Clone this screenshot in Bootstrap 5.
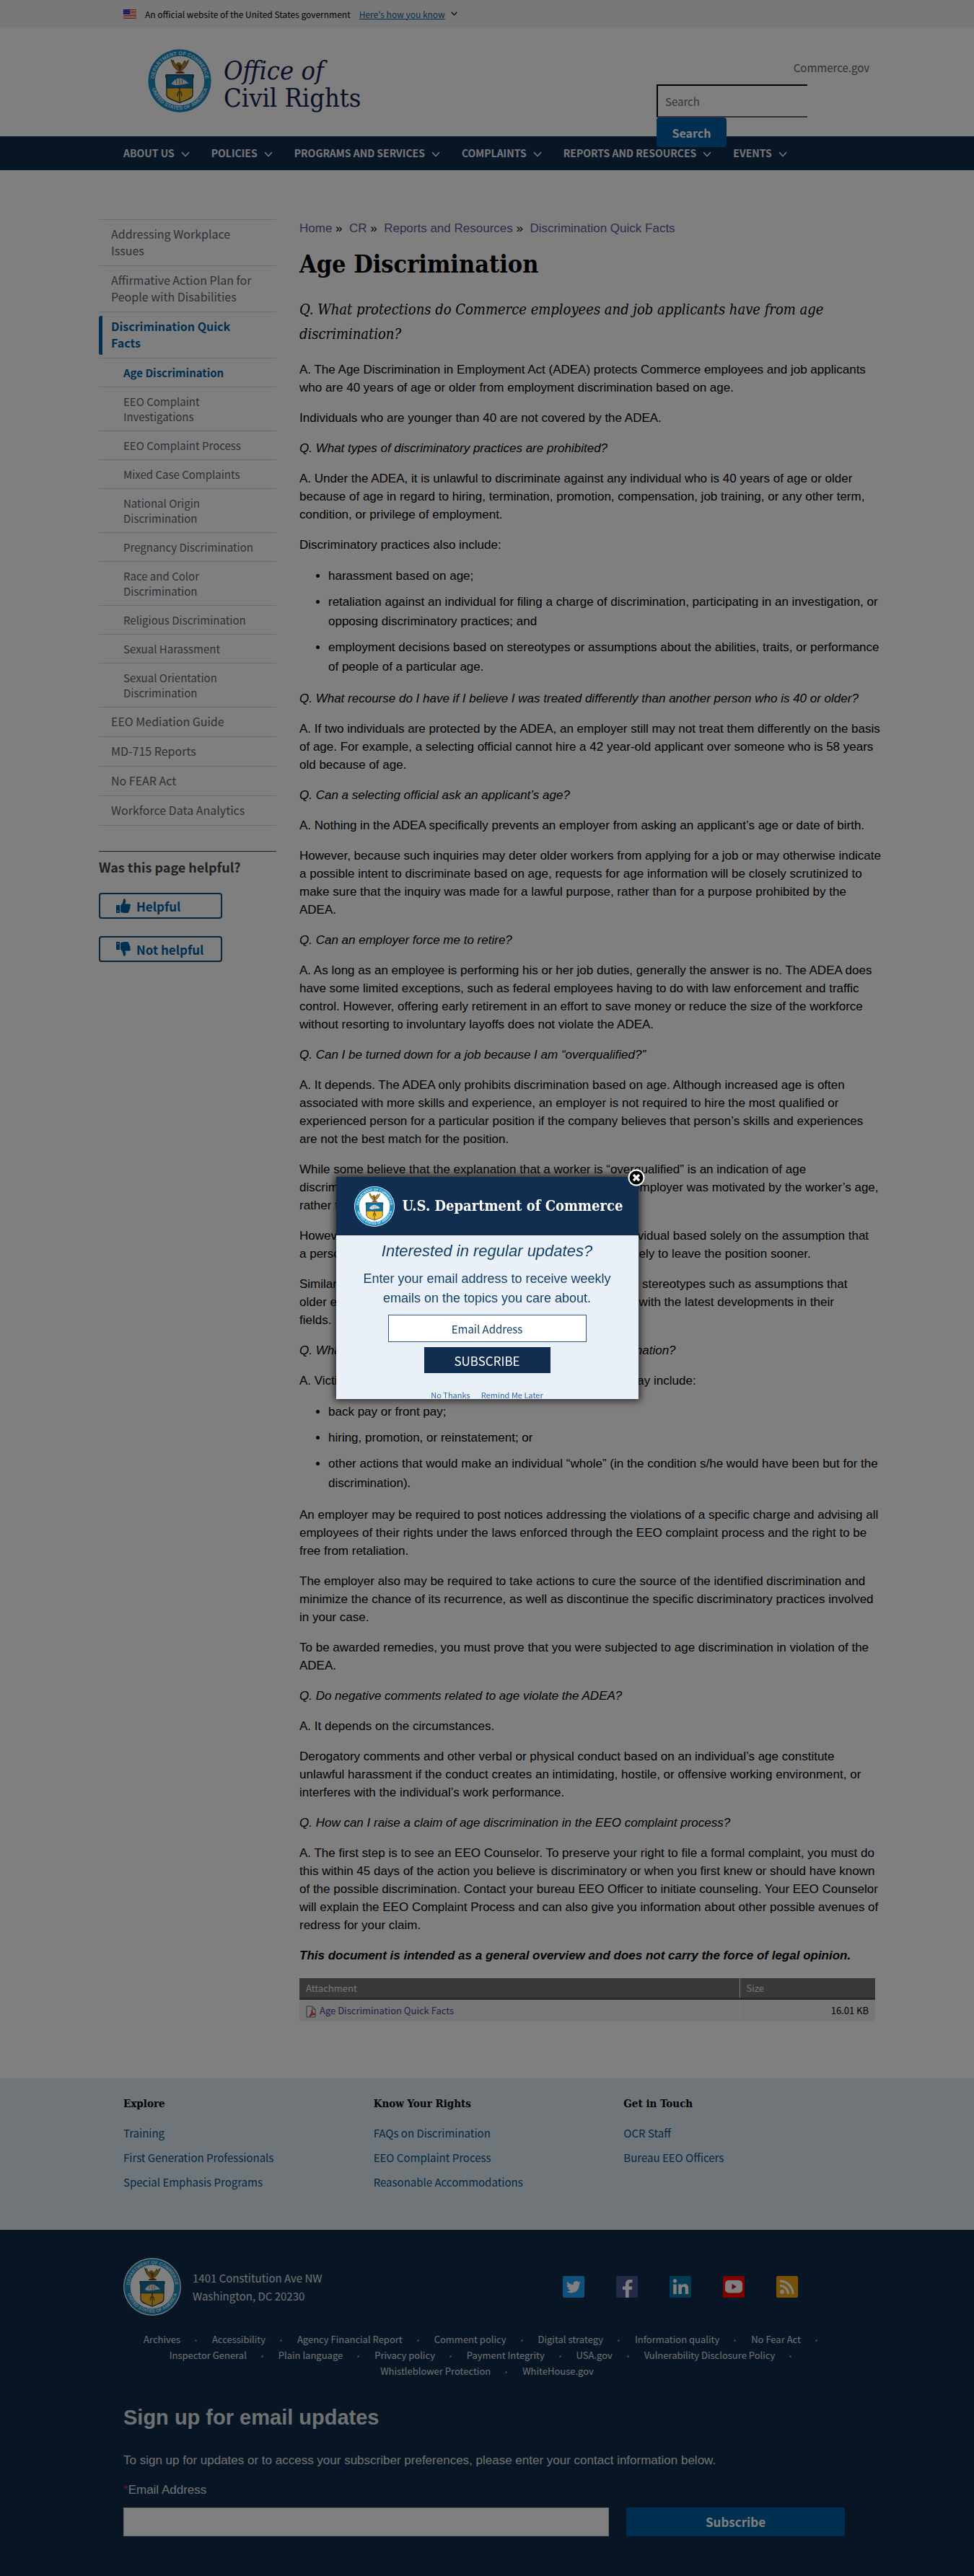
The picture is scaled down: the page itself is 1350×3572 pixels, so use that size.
<!DOCTYPE html>
<html lang="en">
<head>
<meta charset="utf-8">
<meta name="viewport" content="width=device-width, initial-scale=1">
<title>Age Discrimination | Office of Civil Rights</title>
<link rel="stylesheet" href="https://cdn.jsdelivr.net/npm/bootstrap@5.3.0/dist/css/bootstrap.min.css">
<style>
:root{--navy:#112a4b;--blue:#005ea2;--ssp:"Noto Sans CJK SC",sans-serif;--lib:"Liberation Sans",sans-serif;--ser:"DejaVu Serif Condensed","DejaVu Serif",serif}
body{font-family:var(--ssp);font-size:15px;line-height:23px;color:#000;background:#fff}
a{text-decoration:none}
.wrap{width:100%;max-width:1040px;margin:0 auto;padding:0 16px}
.wrap-wide{width:100%;max-width:1076px;margin:0 auto;padding-top:68px;gap:32px}
.gov{background:#f0f0f0;height:38px;font-size:12px}
.gov a{color:#0b5c94;text-decoration:underline}
.site-head{height:151px}
.head-in{max-width:1072px;margin:0 auto;padding:29px 6px 0 65px}
.wordmark{font-family:var(--ser);font-size:36px;line-height:38px;color:#14204e;padding-top:12px}
.head-right{width:295px;padding-top:15px}
.head-right>a{color:#5b616b}
.searchform{width:209px;margin-bottom:-40px;position:relative;z-index:2}
.searchform input{height:46px;border:2px solid #000;border-right:0;border-bottom-color:#666;border-radius:0;font-size:15px;padding:4px 10px;background:#fff}
.searchform input::placeholder{color:#6b6b6b}
.searchform button{height:41px;width:97px;border-radius:4px;font-size:16px}
.btn-blue{background:var(--blue);color:#fff;font-weight:700;border:0}
.mainnav{background:var(--navy);height:47px}
.mainnav .wrap{gap:30px}
.mainnav a{color:#e8ecf4;font-weight:700;font-size:14px;line-height:47px}
.mainnav svg{margin-left:9px}
.side{width:246px;flex:none}
.side ul{list-style:none;margin:0;padding:0}
.side li{border-top:1px solid #d6d7d9}
.side .top-list{border-bottom:1px solid #d6d7d9}
.side a{display:block;color:#5b616b;font-size:16px;padding:8px 20px 9px 17px}
.side ul ul a{font-size:15px;line-height:21px;padding:9px 14px 9px 34px}
.side a.on{color:var(--blue);font-weight:700}
.side a.bar{border-left:5px solid var(--blue);padding:3px 40px 5px 12px;border-radius:3px;margin:5px 0 4px}
.side hr{margin:35px 0 9px;border-color:#3c3c3c;opacity:1}
.side h2{font-size:18px;line-height:24px;font-weight:700;color:#414141;margin:0 0 24px}
.vote{width:171px;height:36px;border:2px solid #164b75;border-radius:4px;background:transparent;color:var(--blue);font-weight:700;font-size:17px;padding:0 0 0 22px}
.art{font-family:var(--lib);font-size:17px;line-height:25px;min-width:0;margin-right:-10px}
.art p{margin:0 0 17px}
.crumbs a{color:#62549c}
.art h1{font-family:var(--ser);font-weight:700;font-size:34px;line-height:44px;margin:15px 0 24px}
.art h2{font-family:var(--ser);font-style:italic;font-size:20px;line-height:34px;margin:0 0 20px;font-weight:400}
.art ul{margin:0 0 18px;padding-left:40px}
.art li{line-height:27px;margin-bottom:9px}
.filebox{padding:2px 10px 0 0}
.filetab{font-family:var(--ssp);font-size:13px;line-height:20px;width:100%}
.filetab th{background:#727272;color:#eee;font-weight:400;padding:4px 9px 3px;border-bottom:3px solid #555}
.filetab td{background:#ececec;padding:5px 9px}
.filetab th+th,.filetab td+td{border-left:1px solid #f7f7f7;width:188px}
.filetab a{color:#4c3c92}
.explore{background:#e1eaf3;margin-top:79px;padding:23px 0 54px;font-size:15px}
.explore h3{font-family:var(--ser);font-weight:700;font-size:15px;line-height:24px;margin:0 0 17px}
.explore ul{margin:0}
.explore li{line-height:24px;margin-bottom:10px}
.explore li:last-child{margin-bottom:0}
.explore a{color:#005288}
.foot{background:var(--navy);color:#dfe1e2;padding-top:39px;padding-bottom:50px}
.foot a{color:#dfe1e2}
.addr{line-height:25px}
.social{gap:44px;padding-right:73px}
.flinks{list-style:none;margin:22px 0 0;padding:0;font-size:13px;line-height:22px;text-align:center}
.flinks li{display:inline-block;padding-right:18px}
.flinks li:not(:last-child)::after{content:"";display:inline-block;width:3px;height:3px;border-radius:50%;background:#75859d;vertical-align:middle;margin-left:20px}
.flinks li:last-child{padding-right:0}
.signup{font-family:var(--lib);font-size:17px;line-height:25px;padding-right:8px}
.signup h2{font-size:29px;line-height:34px;font-weight:700;margin:36px 0 30px}
.signup label{margin-bottom:12px}
.signup label span{color:#e31c5f}
.signup input{height:40px;border-radius:0;background:#fff;border:1px solid #ccc}
.signup button{height:40px;width:303px;flex:none;border-radius:3px;font-family:var(--ssp);font-size:17px}
.dim{background:rgba(0,0,0,.5);z-index:10}
.popup{width:419px;height:308px;background:#e9f0f7;box-shadow:0 0 10px 2px rgba(0,0,0,.75);color:#123f6d;font-family:var(--lib)}
.popup-in{height:308px;overflow:hidden}
.popup-head{background:#112e51;height:81px;padding-left:25px;gap:11px;color:#fff;font-family:var(--ser);font-weight:700;font-size:20px}
.popup h2{font-size:22px;line-height:28px;font-style:italic;font-weight:400;margin:8px 0 11px}
.popup p{font-size:18px;line-height:27px;margin:0 0 9px;padding:0 30px}
.popup input{width:275px;height:38px;border:1px solid #33598c;border-radius:0;font-family:var(--ssp);font-size:15px;text-align:center;padding:0}
.popup input::placeholder{color:#123f6d;opacity:1}
.popup .sub{width:175px;height:36px;background:#112e51;color:#fff;border:0;border-radius:0;font-family:var(--ssp);font-size:17px;margin:7px 0 20px;padding:0}
.popup .later{font-family:var(--ssp);font-size:11px;line-height:20px;gap:15px}
.popup .later a{color:#2f68ac;text-decoration:underline}
.closer{right:-9px;top:-11px;width:24px;height:24px;border:0;padding:0;background:none}
</style>
</head>
<body class="d-flex flex-column min-vh-100">
<svg width="0" height="0" class="position-absolute" aria-hidden="true">
<defs>
<path id="arcT" d="M10.500 50a39.500 39.500 0 0 1 79 0"/>
<path id="arcB" d="M5.500 50a44.500 44.500 0 0 0 89 0"/>
<symbol id="seal" viewBox="0 0 100 100">
<circle cx="50" cy="50" r="50" fill="#fff"/><circle cx="50" cy="50" r="48.500" fill="#1b8ac0"/>
<circle cx="50" cy="50" r="38" fill="#fff"/>
<g fill="#d9eefa" font-family="Liberation Sans" font-weight="700" font-size="8">
<text><textPath href="#arcT" startOffset="50%" text-anchor="middle">DEPARTMENT OF COMMERCE</textPath></text>
<text><textPath href="#arcB" startOffset="50%" text-anchor="middle">UNITED STATES OF AMERICA</textPath></text></g>
<path d="M37 17c1 8 5 14 10 17h6c5-3 9-9 11-16-2 2-4 3-5 5 0-1 0-3-1-4-2 3-4 6-6 8l-1-4-3-1-3 2 2 3c-3-1-6-5-7-9l-1 3z" fill="#b3862a" stroke="#5c4210" stroke-width="1"/>
<path d="M47 24l3 12 3-8z" fill="#6b4a12"/><path d="M43 38c3-4 12-4 15 0l-4 1h-7z" fill="#8a3b20"/>
<path d="M29 41h42v4h-1v27c0 6-12 8-20 12-8-4-20-6-20-12V45h-1z" fill="#f4bd2e" stroke="#27394a" stroke-width="1.500"/>
<path d="M29 41h42v4h-1v16H30V45h-1z" fill="#12729f" stroke="#1c3446" stroke-width="1"/>
<path d="M37 55c4-6 8-9 13-9s9 4 14 8l-6 1-7 1-8 1z" fill="#e4e7e5"/><path d="M45 48v6m5-7v8m4-7v6" stroke="#8b5c50" stroke-width="1"/>
<path d="M50 61v22M50 66c-3 2-4 4-3 8m3-8c3 2 4 4 3 8" fill="none" stroke="#6f5512" stroke-width="1.800"/><circle cx="50" cy="63" r="1.500" fill="#a33"/>
</symbol>
<symbol id="chev" viewBox="0 0 12 8"><path d="M1 1l5 5.500L11 1" fill="none" stroke="currentColor" stroke-width="1.600"/></symbol>
<symbol id="thumb" viewBox="0 0 20 20"><path d="M0 9h5v11H0zM6 9.500C8 8 9.500 5.500 10 1c.2-1.200 3-1.200 3.300 2 .1 1.700-.5 3.200-1 4.500H18c2.400 0 2.400 3 1 3.700 1 .9.700 2.700-.6 3.200.6 1 .2 2.500-1 2.900C17.600 19 17 20 15 20h-4c-2 0-3.500-1-5-1.500z" fill="currentColor"/><circle cx="2.500" cy="17.300" r=".9" fill="#fff"/></symbol>
</defs></svg>

<div class="gov"><div class="wrap d-flex align-items-center h-100">
<svg width="18" height="13" viewBox="0 0 18 13" class="me-2"><path fill="#fff" d="M0 0h18v13H0z"/><path d="M0 .5h18M0 2.500h18M0 4.500h18M0 6.500h18M0 8.500h18M0 10.500h18M0 12.500h18" stroke="#db3e1f"/><path fill="#1e33b1" d="M0 0h9v7H0z"/><path d="M1 2h7M1 4.500h7" stroke="#aab3e6" stroke-dasharray="1 1"/></svg>
<span class="ms-1 me-2">An official website of the United States government</span>
<a href="#" class="ms-1 me-2">Here's how you know</a>
<svg width="9" height="6"><use href="#chev"/></svg>
</div></div>

<header class="site-head"><div class="head-in d-flex justify-content-between">
<a href="#" class="d-flex gap-3"><svg width="90" height="90"><use href="#seal"/></svg><span class="wordmark"><i>Office of</i><br>Civil Rights</span></a>
<div class="head-right"><a href="#" class="d-block text-end mb-3 lh-1 pt-1">Commerce.gov</a>
<form class="searchform" onsubmit="return false"><input id="q" class="form-control" type="search" placeholder="Search" aria-label="Search"><button class="btn btn-blue d-block" type="submit">Search</button></form></div>
</div></header>

<nav class="mainnav"><div class="wrap d-flex">
<a href="#">ABOUT US<svg width="12" height="8"><use href="#chev"/></svg></a>
<a href="#">POLICIES<svg width="12" height="8"><use href="#chev"/></svg></a>
<a href="#">PROGRAMS AND SERVICES<svg width="12" height="8"><use href="#chev"/></svg></a>
<a href="#">COMPLAINTS<svg width="12" height="8"><use href="#chev"/></svg></a>
<a href="#">REPORTS AND RESOURCES<svg width="12" height="8"><use href="#chev"/></svg></a>
<a href="#">EVENTS<svg width="12" height="8"><use href="#chev"/></svg></a>
</div></nav>

<div class="wrap-wide d-flex">
<aside class="side">
<ul class="top-list">
<li><a href="#">Addressing Workplace Issues</a></li>
<li><a href="#">Affirmative Action Plan for People with Disabilities</a></li>
<li><a href="#" class="on bar">Discrimination Quick Facts</a>
<ul>
<li><a href="#" class="on">Age Discrimination</a></li>
<li><a href="#">EEO Complaint<br>Investigations</a></li>
<li><a href="#">EEO Complaint Process</a></li>
<li><a href="#">Mixed Case Complaints</a></li>
<li><a href="#">National Origin Discrimination</a></li>
<li><a href="#">Pregnancy Discrimination</a></li>
<li><a href="#">Race and Color Discrimination</a></li>
<li><a href="#">Religious Discrimination</a></li>
<li><a href="#">Sexual Harassment</a></li>
<li><a href="#">Sexual Orientation Discrimination</a></li>
</ul></li>
<li><a href="#">EEO Mediation Guide</a></li>
<li><a href="#">MD-715 Reports</a></li>
<li><a href="#">No FEAR Act</a></li>
<li><a href="#">Workforce Data Analytics</a></li>
</ul>
<hr>
<h2>Was this page helpful?</h2>
<button class="vote d-flex align-items-center gap-2 mb-4"><svg width="20" height="20"><use href="#thumb"/></svg>Helpful</button>
<button class="vote d-flex align-items-center gap-2"><svg width="20" height="20" viewBox="0 0 20 20"><g transform="matrix(1 0 0 -1 0 20)"><use href="#thumb" width="20" height="20"/></g></svg>Not helpful</button>
</aside>

<main class="art flex-grow-1">
<nav class="crumbs"><a href="#">Home</a> » &nbsp;<a href="#">CR</a> » &nbsp;<a href="#">Reports and Resources</a> » &nbsp;<a href="#">Discrimination Quick Facts</a></nav>
<h1>Age Discrimination</h1>
<h2>Q. What protections do Commerce employees and job applicants have from age discrimination?</h2>
<p>A. The Age Discrimination in Employment Act (ADEA) protects Commerce employees and job applicants who are 40 years of age or older from employment discrimination based on age.</p>
<p>Individuals who are younger than 40 are not covered by the ADEA.</p>
<p><i>Q. What types of discriminatory practices are prohibited?</i></p>
<p>A. Under the ADEA, it is unlawful to discriminate against any individual who is 40 years of age or older because of age in regard to hiring, termination, promotion, compensation, job training, or any other term, condition, or privilege of employment.</p>
<p>Discriminatory practices also include:</p>
<ul><li>harassment based on age;</li><li>retaliation against an individual for filing a charge of discrimination, participating in an investigation, or opposing discriminatory practices; and</li><li>employment decisions based on stereotypes or assumptions about the abilities, traits, or performance of people of a particular age.</li></ul>
<p><i>Q. What recourse do I have if I believe I was treated differently than another person who is 40 or older?</i></p>
<p>A. If two individuals are protected by the ADEA, an employer still may not treat them differently on the basis of age. For example, a selecting official cannot hire a 42 year-old applicant over someone who is 58 years old because of age.</p>
<p><i>Q. Can a selecting official ask an applicant’s age?</i></p>
<p>A. Nothing in the ADEA specifically prevents an employer from asking an applicant’s age or date of birth.</p>
<p>However, because such inquiries may deter older workers from applying for a job or may otherwise indicate a possible intent to discriminate based on age, requests for age information will be closely scrutinized to make sure that the inquiry was made for a lawful purpose, rather than for a purpose prohibited by the ADEA.</p>
<p><i>Q. Can an employer force me to retire?</i></p>
<p>A. As long as an employee is performing his or her job duties, generally the answer is no. The ADEA does have some limited exceptions, such as federal employees having to do with law enforcement and traffic control. However, offering early retirement in an effort to save money or reduce the size of the workforce without resorting to involuntary layoffs does not violate the ADEA.</p>
<p><i>Q. Can I be turned down for a job because I am “overqualified?”</i></p>
<p>A. It depends. The ADEA only prohibits discrimination based on age. Although increased age is often associated with more skills and experience, an employer is not required to hire the most qualified or experienced person for a particular position if the company believes that person’s skills and experiences are not the best match for the position.</p>
<p>While some believe that the explanation that a worker is “overqualified” is an indication of age<br>discrimination, the worker then must be able to show that the employer was motivated by the worker’s age,<br>rather than by other factors.</p>
<p>However, an employer may not fail to hire an overqualified individual based solely on the assumption that<br>a person who is overqualified will simply be bored and more likely to leave the position sooner.</p>
<p>Similarly, an employer may not base job decisions on outdated stereotypes such as assumptions that<br>older employees are less readily adaptable or are out of touch with the latest developments in their<br>fields.</p>
<p><i>Q. What remedies are available if I am a victim of age discrimination?</i></p>
<p>A. Victims of age discrimination may be entitled to relief that may include:</p>
<ul><li>back pay or front pay;</li><li>hiring, promotion, or reinstatement; or</li><li>other actions that would make an individual “whole” (in the condition s/he would have been but for the discrimination).</li></ul>
<p>An employer may be required to post notices addressing the violations of a specific charge and advising all employees of their rights under the laws enforced through the EEO complaint process and the right to be free from retaliation.</p>
<p>The employer also may be required to take actions to cure the source of the identified discrimination and minimize the chance of its recurrence, as well as discontinue the specific discriminatory practices involved in your case.</p>
<p>To be awarded remedies, you must prove that you were subjected to age discrimination in violation of the ADEA.</p>
<p><i>Q. Do negative comments related to age violate the ADEA?</i></p>
<p>A. It depends on the circumstances.</p>
<p>Derogatory comments and other verbal or physical conduct based on an individual’s age constitute unlawful harassment if the conduct creates an intimidating, hostile, or offensive working environment, or interferes with the individual’s work performance.</p>
<p><i>Q. How can I raise a claim of age discrimination in the EEO complaint process?</i></p>
<p>A. The first step is to see an EEO Counselor. To preserve your right to file a formal complaint, you must do this within 45 days of the action you believe is discriminatory or when you first knew or should have known of the possible discrimination. Contact your bureau EEO Officer to initiate counseling. Your EEO Counselor will explain the EEO Complaint Process and can also give you information about other possible avenues of redress for your claim.</p>
<p><b><i>This document is intended as a general overview and does not carry the force of legal opinion.</i></b></p>
<div class="filebox"><table class="filetab"><thead><tr><th>Attachment</th><th>Size</th></tr></thead>
<tbody><tr><td><svg width="15" height="17" viewBox="0 0 15 17" class="me-1"><path d="M1 1h8l4 4v11H1z" fill="#f4f4f4" stroke="#666"/><path d="M9 1v4h4" fill="none" stroke="#666"/><path d="M5 15c3-3 4-7 3-9 0 4 2 6 5 6-4 0-6 1-8 3z" fill="none" stroke="#d11f1f" stroke-width="1.500"/></svg><a href="#">Age Discrimination Quick Facts</a></td><td class="text-end">16.01 KB</td></tr></tbody></table></div>
</main>
</div>

<section class="explore"><div class="wrap px-0"><div class="d-flex">
<div class="flex-fill w-100 px-3"><h3>Explore</h3><ul class="list-unstyled"><li><a href="#">Training</a></li><li><a href="#">First Generation Professionals</a></li><li><a href="#">Special Emphasis Programs</a></li></ul></div>
<div class="flex-fill w-100 px-3"><h3>Know Your Rights</h3><ul class="list-unstyled"><li><a href="#">FAQs on Discrimination</a></li><li><a href="#">EEO Complaint Process</a></li><li><a href="#">Reasonable Accommodations</a></li></ul></div>
<div class="flex-fill w-100 px-3"><h3>Get in Touch</h3><ul class="list-unstyled"><li><a href="#">OCR Staff</a></li><li><a href="#">Bureau EEO Officers</a></li></ul></div>
</div></div></section>

<footer class="foot flex-grow-1"><div class="wrap">
<div class="d-flex align-items-center justify-content-between">
<div class="d-flex align-items-center gap-3"><svg width="80" height="80"><use href="#seal"/></svg><address class="addr mb-0">1401 Constitution Ave NW<br>Washington, DC 20230</address></div>
<div class="social d-flex">
<a href="#" aria-label="Twitter"><svg width="30" height="30" viewBox="0 0 30 30"><rect width="30" height="30" rx="2" fill="#1da1f2"/><path d="M25 9c-.8.400-1.500.6-2.400.7.900-.5 1.500-1.300 1.800-2.300-.8.500-1.700.8-2.600 1a4.100 4.100 0 0 0-7 3.700C11.400 12 8.400 10.400 6.300 7.800c-1 1.900-.6 4.200 1.300 5.500-.7 0-1.300-.2-1.900-.5 0 2 1.400 3.700 3.300 4.100-.6.200-1.200.2-1.800.1.500 1.600 2 2.800 3.800 2.800A8.300 8.300 0 0 1 5 21.500c7 4.400 18 1.500 18-10.400.8-.6 1.500-1.300 2-2.100z" fill="#fff"/></svg></a>
<a href="#" aria-label="Facebook"><svg width="30" height="30" viewBox="0 0 30 30"><rect width="30" height="30" rx="2" fill="#46528c"/><path d="M13 30V19H9v-4.500h4V11c0-4 2.500-6 6-6l3.500.2v4H20c-2 0-2.400 1-2.400 2.300v3h4.700l-.6 4.500h-4.100v11z" fill="#fff"/></svg></a>
<a href="#" aria-label="LinkedIn"><svg width="30" height="30" viewBox="0 0 30 30"><rect width="30" height="30" rx="2" fill="#0477a5"/><circle cx="7.500" cy="6.800" r="2.600" fill="#fff"/><path d="M5.200 11.500h4.500V25H5.200zM12.300 11.500h4.300v1.900c.6-1.100 2.100-2.300 4.300-2.300 4.500 0 5.300 3 5.300 6.800V25h-4.500v-6.400c0-1.500 0-3.500-2.200-3.500s-2.600 1.700-2.600 3.400V25h-4.600z" fill="#fff"/></svg></a>
<a href="#" aria-label="YouTube"><svg width="30" height="30" viewBox="0 0 30 30"><rect width="30" height="30" rx="2" fill="#f00"/><rect x="3" y="6" width="24" height="17.500" rx="5" fill="#fff"/><path d="M12.500 10.800v8l6.500-4z" fill="#c4122f"/></svg></a>
<a href="#" aria-label="RSS"><svg width="30" height="30" viewBox="0 0 30 30"><rect width="30" height="30" rx="2" fill="#efa20b"/><circle cx="8" cy="22" r="3" fill="#fff"/><path d="M5 13.500A11.500 11.500 0 0 1 16.500 25M5 7a18 18 0 0 1 18 18" fill="none" stroke="#fff" stroke-width="3.200"/></svg></a>
</div></div>
<ul class="flinks">
<li><a href="#">Archives</a></li>
<li><a href="#">Accessibility</a></li>
<li><a href="#">Agency Financial Report</a></li>
<li><a href="#">Comment policy</a></li>
<li><a href="#">Digital strategy</a></li>
<li><a href="#">Information quality</a></li>
<li><a href="#">No Fear Act</a></li>
<li><a href="#">Inspector General</a></li>
<li><a href="#">Plain language</a></li>
<li><a href="#">Privacy policy</a></li>
<li><a href="#">Payment Integrity</a></li>
<li><a href="#">USA.gov</a></li>
<li><a href="#">Vulnerability Disclosure Policy</a></li>
<li><a href="#">Whistleblower Protection</a></li>
<li><a href="#">WhiteHouse.gov</a></li>
</ul>
<form class="signup" onsubmit="return false">
<h2>Sign up for email updates</h2>
<p class="mb-3">To sign up for updates or to access your subscriber preferences, please enter your contact information below.</p>
<label for="em" class="d-block"><span>*</span>Email Address</label>
<div class="d-flex gap-4"><input id="em" type="email" class="form-control"><button class="btn btn-blue" type="submit">Subscribe</button></div>
</form>
</div></footer>

<div class="dim position-fixed top-0 start-0 w-100 h-100 d-flex align-items-center justify-content-center">
<div class="popup position-relative" role="dialog" aria-label="Email updates">
<div class="popup-in text-center">
<div class="popup-head d-flex align-items-center"><svg width="56" height="56"><use href="#seal"/></svg><span>U.S. Department of Commerce</span></div>
<h2>Interested in regular updates?</h2>
<p>Enter your email address to receive weekly emails on the topics you care about.</p>
<form onsubmit="return false"><input id="pem" type="email" placeholder="Email Address" aria-label="Email Address"><br><button class="sub" type="submit">SUBSCRIBE</button></form>
<div class="later d-flex justify-content-center"><a href="#">No Thanks</a><a href="#">Remind Me Later</a></div>
</div>
<button class="closer position-absolute" aria-label="Close"><svg width="24" height="24" viewBox="0 0 24 24" class="d-block"><circle cx="12" cy="12" r="10.500" fill="#000" stroke="#fff" stroke-width="2"/><path d="M8 8l8 8m0-8l-8 8" stroke="#fff" stroke-width="3.200"/></svg></button>
</div></div>
<script src="https://cdn.jsdelivr.net/npm/bootstrap@5.3.0/dist/js/bootstrap.bundle.min.js"></script>
</body>
</html>
